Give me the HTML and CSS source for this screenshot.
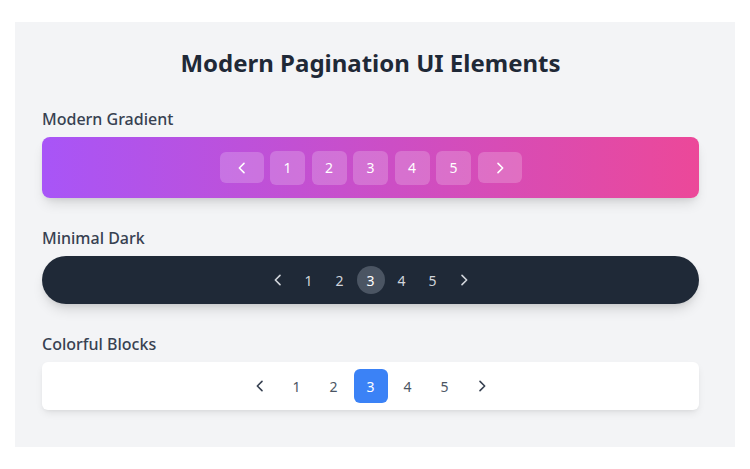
FILE: index.html
```html
<!DOCTYPE html>
<html lang="en">
<head>
<meta charset="utf-8">
<title>Modern Pagination UI Elements</title>
<link rel="stylesheet" href="styles.css">
</head>
<body>
<main class="panel">
  <h1 class="title">Modern Pagination UI Elements</h1>

  <section class="section">
    <h2 class="label">Modern Gradient</h2>
    <nav class="bar bar-gradient">
      <button class="g-btn g-arrow"><svg viewBox="0 0 24 24" class="ico"><path d="M15 19l-7-7 7-7"/></svg></button>
      <button class="g-btn">1</button>
      <button class="g-btn">2</button>
      <button class="g-btn">3</button>
      <button class="g-btn">4</button>
      <button class="g-btn">5</button>
      <button class="g-btn g-arrow"><svg viewBox="0 0 24 24" class="ico"><path d="M9 5l7 7-7 7"/></svg></button>
    </nav>
  </section>

  <section class="section">
    <h2 class="label">Minimal Dark</h2>
    <nav class="bar bar-dark">
      <button class="d-btn"><svg viewBox="0 0 24 24" class="ico"><path d="M15 19l-7-7 7-7"/></svg></button>
      <button class="d-btn">1</button>
      <button class="d-btn">2</button>
      <button class="d-btn d-active">3</button>
      <button class="d-btn">4</button>
      <button class="d-btn">5</button>
      <button class="d-btn"><svg viewBox="0 0 24 24" class="ico"><path d="M9 5l7 7-7 7"/></svg></button>
    </nav>
  </section>

  <section class="section">
    <h2 class="label">Colorful Blocks</h2>
    <nav class="bar bar-light">
      <button class="c-btn c-arrow"><svg viewBox="0 0 24 24" class="ico"><path d="M15 19l-7-7 7-7"/></svg></button>
      <button class="c-btn">1</button>
      <button class="c-btn">2</button>
      <button class="c-btn c-active">3</button>
      <button class="c-btn">4</button>
      <button class="c-btn">5</button>
      <button class="c-btn c-arrow"><svg viewBox="0 0 24 24" class="ico"><path d="M9 5l7 7-7 7"/></svg></button>
    </nav>
  </section>
</main>
</body>
</html>
```
FILE: styles.css
```css
* { box-sizing: border-box; }

html, body {
  margin: 0;
  background: #ffffff;
}

body {
  padding: 22px 15px;
  font-family: "Noto Sans", "Open Sans", sans-serif;
}

.panel {
  background: #f3f4f6;
  padding: 23px 36px 37px 27px;
  display: flex;
  flex-direction: column;
}

.title {
  margin: 0 0 26px;
  text-align: center;
  font-size: 24px;
  line-height: 36px;
  font-weight: 700;
  color: #1f2937;
}

.section {
  display: flex;
  flex-direction: column;
  gap: 6px;
  margin-bottom: 28px;
}
.section:last-child { margin-bottom: 0; }

.label {
  margin: 0;
  font-size: 16px;
  line-height: 24px;
  font-weight: 500;
  color: #374151;
}

.bar {
  display: flex;
  justify-content: center;
  align-items: center;
}

button {
  font-family: inherit;
  border: 0;
  padding: 0;
  margin: 0;
  background: none;
  display: flex;
  align-items: center;
  justify-content: center;
  cursor: pointer;
}

.ico {
  width: 16px;
  height: 16px;
  fill: none;
  stroke: currentColor;
  stroke-width: 2.4;
  stroke-linecap: round;
  stroke-linejoin: round;
}

/* Gradient */
.bar-gradient {
  height: 61px;
  border-radius: 8px;
  background: linear-gradient(90deg, #a855f7 0%, #ec4899 100%);
  box-shadow: 0 8px 14px -4px rgba(0, 0, 0, 0.14), 0 3px 6px -2px rgba(0, 0, 0, 0.08);
  gap: 6.5px;
}
.g-btn {
  width: 35px;
  height: 34px;
  border-radius: 6px;
  background: rgba(255, 255, 255, 0.2);
  color: #ffffff;
  font-size: 14px;
  font-weight: 400;
}
.g-arrow {
  width: 44px;
  height: 31px;
}

/* Dark */
.bar-dark {
  height: 48px;
  border-radius: 24px;
  background: #1f2937;
  box-shadow: 0 8px 14px -4px rgba(0, 0, 0, 0.16), 0 3px 6px -2px rgba(0, 0, 0, 0.08);
  gap: 3px;
}
.d-btn {
  width: 28px;
  height: 28px;
  border-radius: 50%;
  color: #d1d5db;
  font-size: 14px;
}
.d-active {
  background: #4b5563;
  color: #ffffff;
}

/* Colorful */
.bar-light {
  height: 48px;
  border-radius: 6px;
  background: #ffffff;
  box-shadow: 0 4px 8px -2px rgba(0, 0, 0, 0.1), 0 2px 4px -2px rgba(0, 0, 0, 0.06);
  gap: 3px;
}
.c-btn {
  width: 34px;
  height: 34px;
  border-radius: 6px;
  color: #4b5563;
  font-size: 14px;
}
.c-arrow { color: #374151; }
.c-active {
  background: #3b82f6;
  color: #ffffff;
}
```
